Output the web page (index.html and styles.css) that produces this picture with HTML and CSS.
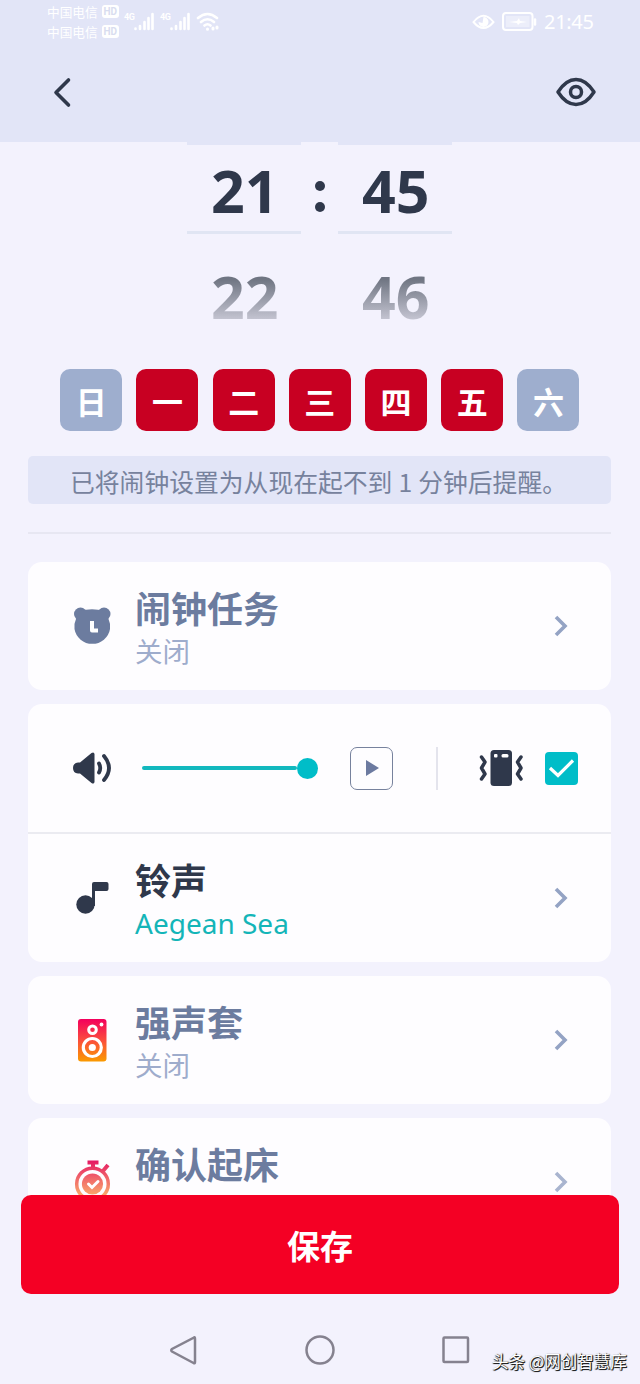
FILE: index.html
```html
<!DOCTYPE html>
<html lang="zh-CN">
<head>
<meta charset="utf-8">
<title>闹钟</title>
<link rel="stylesheet" href="styles.css">
</head>
<body>
<div class="phone">
  <header class="header">
    <div class="status">
      <div class="carriers">
        <div class="carrier">中国电信<span class="hd">HD</span></div>
        <div class="carrier">中国电信<span class="hd">HD</span></div>
      </div>
      <div class="signal"><span class="gen">4G</span>
        <svg width="20" height="19" viewBox="0 0 20 19" stroke="#fff" stroke-width="2.6" stroke-linecap="round"><path d="M1.5 16.5v.5M6 14v3M10.500 10v7M14.500 6v11M18.500 2v15"/></svg>
      </div>
      <div class="signal"><span class="gen">4G</span>
        <svg width="20" height="19" viewBox="0 0 20 19" stroke="#fff" stroke-width="2.6" stroke-linecap="round"><path d="M1.500 16.5v.5M6 14v3M10.500 10v7M14.500 6v11M18.500 2v15"/></svg>
      </div>
      <svg class="wifi" width="24" height="20" viewBox="0 0 24 20" fill="none" stroke="#fff" stroke-width="2.6" stroke-linecap="round"><path d="M2 6Q11.500-2 21 6M5 10Q11.500 4.500 18 10M8.500 13.500Q11.500 11 14.500 13.500"/><path d="M11.500 17v.2M17 16v1M21 15v1" stroke-width="3"/></svg>
      <div class="status-right">
        <svg width="23" height="16" viewBox="0 0 23 16"><path d="M1.500 8Q11.500-4.500 21.500 8Q11.500 20 1.500 8Z" fill="none" stroke="#fff" stroke-width="2"/><path d="M11.500 3a5 5 0 1 1-5 5l4 1z" fill="#fff"/></svg>
        <svg width="36" height="20" viewBox="0 0 36 20"><rect x="1" y="1" width="29.500" height="17" rx="3" fill="none" stroke="#fff" stroke-width="2"/><path d="M33 7.500v5" stroke="#fff" stroke-width="2.500" stroke-linecap="round"/><rect x="4" y="4" width="23.500" height="11" fill="#fff" opacity=".35"/><path d="M7 10l8-1 2-3 1 3 7 1-7 1-2 2-1-2z" fill="#fff"/></svg>
        <span class="clock">21:45</span>
      </div>
    </div>
    <div class="appbar">
      <svg width="22" height="34" viewBox="0 0 22 34" fill="none" stroke="#2f384b" stroke-width="3.600" stroke-linecap="round" stroke-linejoin="round"><path d="M17.500 5L5 17.500L17.500 30"/></svg>
      <svg width="42" height="34" viewBox="0 0 42 34" fill="none" stroke="#2f384b" stroke-width="3.500" stroke-linejoin="round"><path d="M3 17Q11 4.500 21 4.500T39 17Q31 29.500 21 29.500T3 17Z"/><circle cx="21" cy="17" r="5.500"/></svg>
    </div>
  </header>

  <main class="content">
    <section class="picker">
      <div class="wheel"><div class="digits current">21</div><div class="digits next">22</div></div>
      <div class="colon"><i></i><i></i></div>
      <div class="wheel"><div class="digits current">45</div><div class="digits next">46</div></div>
    </section>

    <section class="days">
      <div class="day off">日</div><div class="day">一</div><div class="day">二</div><div class="day">三</div><div class="day">四</div><div class="day">五</div><div class="day off">六</div>
    </section>

    <div class="notice">已将闹钟设置为从现在起不到 1 分钟后提醒。</div>
    <div class="rule"></div>

    <section class="cards">
      <div class="card">
        <div class="row">
          <svg class="icon" width="40" height="44" viewBox="0 0 40 44"><g fill="#6c7c9f"><circle cx="8.500" cy="10" r="6.500"/><circle cx="32" cy="10" r="6.500"/><path d="M8 7Q20 3.500 32 7L36.500 15Q38.500 19 38 25A18 17.800 0 0 1 2.500 25Q2 19 4 15Z"/></g><path d="M20 17v9.500h6" fill="none" stroke="#fff" stroke-width="4" stroke-linejoin="round"/></svg>
          <div class="label"><div class="title muted">闹钟任务</div><div class="sub">关闭</div></div>
          <svg class="chevron" width="16" height="24" viewBox="0 0 16 24"><path d="M3 3L12 12L3 21"/></svg>
        </div>
      </div>

      <div class="card">
        <div class="row sound">
          <svg class="icon" width="40" height="34" viewBox="0 0 40 34"><path d="M6 11.500h2L19.500 2Q22 .5 22.500 3V31Q22 33.500 19.500 32L8 22.500H6Q1 22 1 17T6 11.500Z" fill="#2f384b"/><path d="M27 12.500Q29.500 17 27 21.500M32 5Q42 17 32 29" fill="none" stroke="#2f384b" stroke-width="3.800" stroke-linecap="round"/></svg>
          <div class="slider"><span class="track"></span><span class="knob"></span></div>
          <div class="play"><svg width="14" height="18" viewBox="0 0 14 18"><path d="M1 1L14 9L1 17Z" fill="#6c7aa0"/></svg></div>
          <div class="separator"></div>
          <svg class="vibrate" width="46" height="38" viewBox="0 0 46 38"><rect x="11.500" y="1" width="21.500" height="36" rx="3.500" fill="#2f384b"/><rect x="15" y="5" width="3.500" height="3.500" rx="1" fill="#fff"/><rect x="22.500" y="5" width="7" height="3.500" rx="1.500" fill="#fff"/><path d="M2.500 8L6 13L2.500 19L6 25L2.500 30M42 8L38.500 13L42 19L38.500 25L42 30" fill="none" stroke="#2f384b" stroke-width="3.500" stroke-linejoin="round" stroke-linecap="round"/></svg>
          <div class="check"><svg width="33" height="33" viewBox="0 0 33 33"><path d="M5 16L13 23.500L28 8.500" fill="none" stroke="#fff" stroke-width="3.200"/></svg></div>
        </div>
        <div class="row ringtone">
          <svg class="icon" width="40" height="36" viewBox="0 0 40 36" fill="#2f384b"><circle cx="13.500" cy="24.500" r="9.200"/><path d="M20 26V4Q20 2 22 2H34.500Q36.500 2 36.500 4V9Q36.500 11 34.500 11H23V26Z"/></svg>
          <div class="label"><div class="title">铃声</div><div class="sub song">Aegean Sea</div></div>
          <svg class="chevron" width="16" height="24" viewBox="0 0 16 24"><path d="M3 3L12 12L3 21"/></svg>
        </div>
      </div>

      <div class="card">
        <div class="row">
          <svg class="icon" width="40" height="44" viewBox="0 0 40 44"><defs><linearGradient id="speaker" x1="0" y1="0" x2="0" y2="1"><stop stop-color="#f3005d"/><stop offset=".5" stop-color="#fb4d3c"/><stop offset="1" stop-color="#fa9a00"/></linearGradient></defs><rect x="6" y="1" width="28.500" height="42.500" rx="3" fill="url(#speaker)"/><g fill="none" stroke="#fff"><circle cx="20.500" cy="11.800" r="3.800" stroke-width="3"/><circle cx="20.300" cy="29.500" r="9" stroke-width="3.200"/></g><circle cx="20.300" cy="29.500" r="3.600" fill="#fff"/><circle cx="29.500" cy="6.500" r="1.900" fill="#fff"/></svg>
          <div class="label"><div class="title muted">强声套</div><div class="sub">关闭</div></div>
          <svg class="chevron" width="16" height="24" viewBox="0 0 16 24"><path d="M3 3L12 12L3 21"/></svg>
        </div>
      </div>

      <div class="card last">
        <div class="row">
          <svg class="icon" width="40" height="44" viewBox="0 0 40 44"><defs><linearGradient id="watch" gradientUnits="userSpaceOnUse" x1="0" y1="0" x2="0" y2="38"><stop stop-color="#e41464"/><stop offset=".5" stop-color="#f16a6a"/><stop offset="1" stop-color="#fbb36c"/></linearGradient></defs><g fill="none" stroke="url(#watch)"><circle cx="20.500" cy="24" r="15.800" stroke-width="3.500"/><path d="M15.500 2.500h11M21 2v7M31 11l5-6" stroke-width="4"/></g><circle cx="20.500" cy="24" r="10.600" fill="url(#watch)"/><path d="M16.500 24l3.500 3.500l6-6" fill="none" stroke="#fff" stroke-width="3" stroke-linecap="round"/></svg>
          <div class="label"><div class="title muted">确认起床</div><div class="sub">关闭</div></div>
          <svg class="chevron" width="16" height="24" viewBox="0 0 16 24"><path d="M3 3L12 12L3 21"/></svg>
        </div>
      </div>
    </section>
  </main>

  <footer class="footer">
    <div class="save">保存</div>
    <div class="navbar">
      <svg width="28" height="32" viewBox="0 0 28 32"><path d="M25 3.500Q26 2.500 26 5V28Q26 30 24.500 29L3 17.500Q1.500 16.300 3 15Z"/></svg>
      <svg width="32" height="32" viewBox="0 0 32 32"><circle cx="16" cy="16" r="13.500"/></svg>
      <svg width="28" height="28" viewBox="0 0 28 28"><rect x="1.500" y="1.500" width="24.500" height="24.500" rx="1"/></svg>
      <span class="credit">头条 @网创智慧库</span>
    </div>
  </footer>
</div>
</body>
</html>
```
FILE: styles.css
```css
* { box-sizing: border-box; }
body { margin: 0; }
svg { display: block; flex: none; }

.phone {
  width: 640px;
  height: 1384px;
  overflow: hidden;
  display: flex;
  flex-direction: column;
  background: #f3f2fd;
  color: #2f384b;
  font-family: "Noto Sans", "Noto Sans CJK SC", sans-serif;
}

/* Header */
.header { height: 142px; flex: none; background: #e2e5f7; }
.status {
  height: 44px;
  padding: 2px 46px 0 47px;
  display: flex;
  align-items: flex-start;
  color: #fff;
}
.carriers { width: 77px; }
.carrier {
  display: flex;
  align-items: center;
  gap: 4px;
  height: 19.500px;
  font: 12.700px/19px "Noto Sans CJK SC", sans-serif;
  white-space: nowrap;
}
.hd {
  width: 17px;
  height: 13px;
  border-radius: 3px;
  background: #fff;
  color: #d9ddef;
  font: bold 10px/13px Roboto, sans-serif;
  text-align: center;
}
.signal { display: flex; width: 36px; padding-top: 10px; }
.gen { width: 10px; margin-top: 0; font: bold 9px/10px Roboto, sans-serif; letter-spacing: -.5px; }
.wifi { margin-top: 10px; }
.status-right { margin-left: auto; display: flex; align-items: center; height: 40px; gap: 7px; }
.clock { width: 50px; margin-left: -1px; font: 20px/24px "Noto Sans", sans-serif; letter-spacing: -.3px; white-space: nowrap; }
.appbar { display: flex; justify-content: space-between; padding: 31px 43px 0 51px; }

/* Time picker */
.picker { height: 227px; display: flex; justify-content: center; padding-right: 1px; }
.wheel { width: 114px; border-top: 3px solid #e2e5f7; }
.digits { font: bold 59px/60px "Noto Sans", sans-serif; padding-left: 24px; }
.current { height: 89px; padding-top: 15px; border-bottom: 3px solid #e0e5f3; }
.next {
  width: 114px;
  height: 90px;
  padding-top: 32px;
  background: linear-gradient(#6f7582 45px, #c7c7d4 87px);
  background-clip: text;
  -webkit-background-clip: text;
  color: transparent;
}
.colon { width: 37px; padding-top: 39px; display: flex; flex-direction: column; align-items: center; gap: 11px; }
.colon i { width: 10px; height: 10px; border-radius: 50%; background: #2f384b; }

/* Weekdays */
.days { display: flex; gap: 14.200px; padding-left: 60.300px; }
.day {
  width: 62px;
  height: 62px;
  border-radius: 10px;
  background: #c80022;
  color: #fff;
  font: bold 31px/63px "Noto Sans CJK SC", sans-serif;
  text-align: center;
}
.off { background: #9eaece; }

.notice {
  width: 583px;
  height: 48px;
  margin: 25px 0 0 28px;
  border-radius: 5px;
  background: #e2e5f7;
  color: #77829d;
  padding-left: 42px;
  font: 24.800px/50px "Noto Sans CJK SC", sans-serif;
  word-spacing: .5px;
  white-space: nowrap;
}
.rule { width: 583px; height: 2px; margin: 28px 0 28px 28px; background: #e7e7f2; }

/* Cards */
.content { height: 1057px; flex: none; overflow: hidden; }
.cards { display: flex; flex-direction: column; gap: 14px; padding-left: 28px; }
.card { width: 583px; border-radius: 14px; background: #fefdff; }
.row { height: 128px; display: flex; align-items: center; padding: 0 42px 0 44px; }
.label { margin-left: 23px; flex: 1; padding-top: 2px; }
.title { height: 46px; font: bold 36px/44px "Noto Sans CJK SC", sans-serif; }
.muted { color: #6c7c9f; }
.sub { height: 38px; font: 27.500px/38px "Noto Sans CJK SC", sans-serif; color: #9eaccc; }
.song { font: 28px/41px "Noto Sans", sans-serif; color: #14b5b8; }
.chevron { fill: none; stroke: #94a3c4; stroke-width: 3.600; }
.ringtone { height: 130px; border-top: 2px solid #ebebf1; }
.sound { padding-right: 33px; }
.slider { width: 176px; margin-left: 30px; display: flex; align-items: center; }
.track { height: 4px; flex: 1; border-radius: 2px; background: #12b8be; }
.knob { width: 21px; height: 21px; border-radius: 50%; background: #00bdc8; }
.play {
  width: 43px;
  height: 43px;
  margin-left: 32px;
  border: 1.500px solid #77829d;
  border-radius: 7px;
  display: flex;
  align-items: center;
  justify-content: center;
}
.separator { width: 2px; height: 43px; margin-left: 43px; background: #e4e4ed; }
.vibrate { margin-left: 41px; }
.check { width: 33px; height: 33px; margin-left: auto; border-radius: 4px; background: #00bdc8; }
.last .chevron { opacity: .8; }
.last .sub { opacity: .35; }

/* Footer */
.footer { position: relative; margin-top: -4px; }
.save {
  width: 598px;
  height: 99px;
  margin-left: 21px;
  border-radius: 10px;
  background: #f40024;
  color: #fff;
  font: bold 33px/101px "Noto Sans CJK SC", sans-serif;
  text-align: center;
}
.navbar {
  height: 90px;
  padding: 22px 12px 0 169px;
  display: grid;
  grid-template-columns: 135px 138px 50px 1fr;
  fill: none;
  stroke: #85828f;
  stroke-width: 2.500;
}
.navbar svg { align-self: start; justify-self: start; margin-top: 18px; }
.navbar svg:nth-child(3) { margin-top: 20px; }
.credit {
  align-self: start;
  margin-top: 34px;
  color: #fff;
  font: 16.500px/22px "Noto Sans CJK SC", sans-serif;
  white-space: nowrap;
  text-shadow: 1px 1px 0 #222, 1px 0 1px #333, 0 1px 1px #333;
}
```
